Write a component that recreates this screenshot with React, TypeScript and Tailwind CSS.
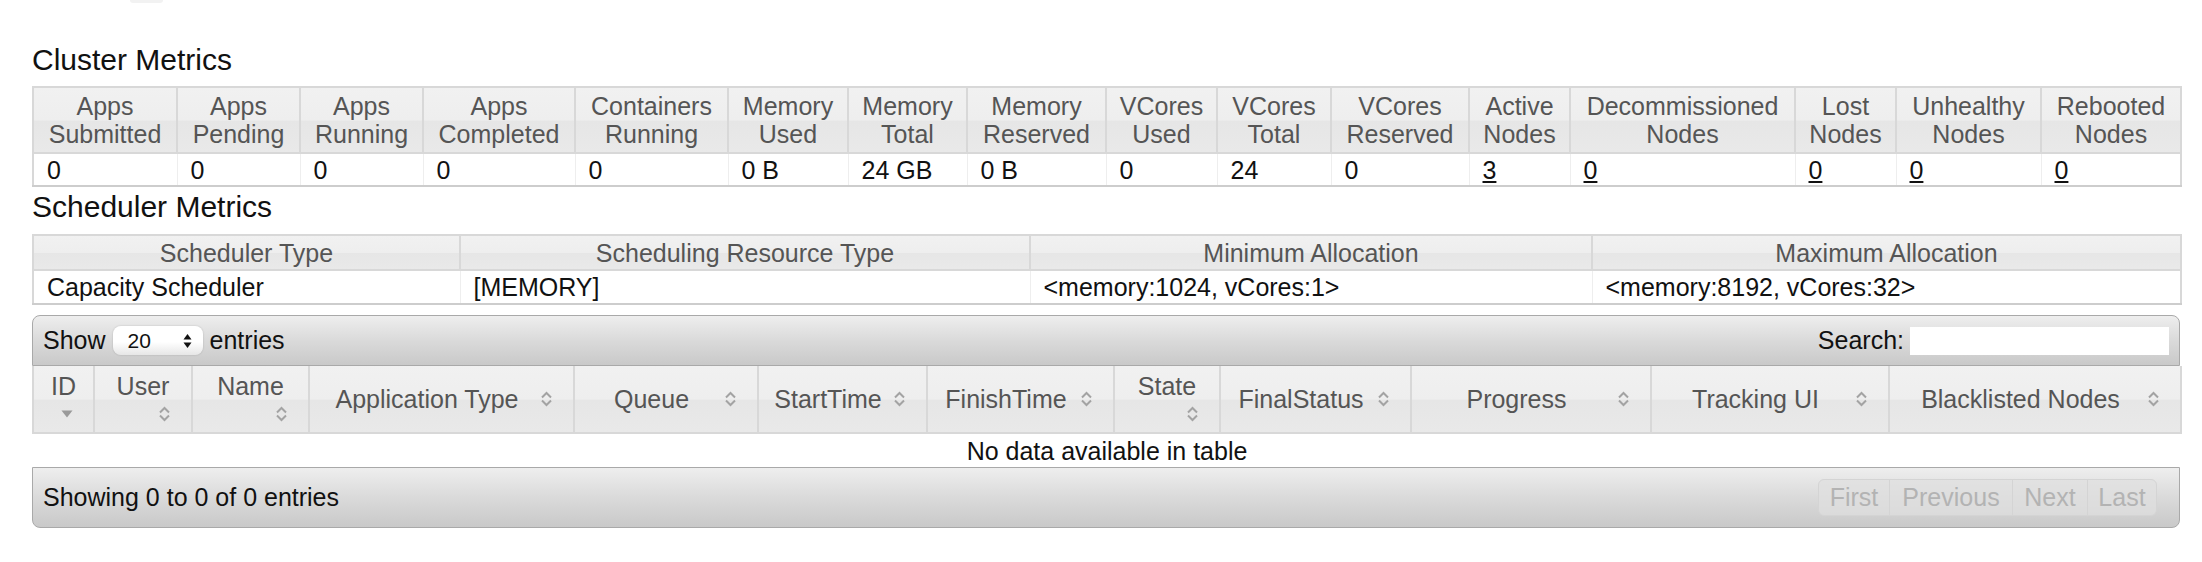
import type { ReactNode } from "react";

const clusterCols = [
  { h: ["Apps", "Submitted"], v: "0", w: "w-[144px]" },
  { h: ["Apps", "Pending"], v: "0", w: "w-[123px]" },
  { h: ["Apps", "Running"], v: "0", w: "w-[123px]" },
  { h: ["Apps", "Completed"], v: "0", w: "w-[152px]" },
  { h: ["Containers", "Running"], v: "0", w: "w-[153px]" },
  { h: ["Memory", "Used"], v: "0 B", w: "w-[120px]" },
  { h: ["Memory", "Total"], v: "24 GB", w: "w-[119px]" },
  { h: ["Memory", "Reserved"], v: "0 B", w: "w-[139px]" },
  { h: ["VCores", "Used"], v: "0", w: "w-[111px]" },
  { h: ["VCores", "Total"], v: "24", w: "w-[114px]" },
  { h: ["VCores", "Reserved"], v: "0", w: "w-[138px]" },
  { h: ["Active", "Nodes"], v: "3", w: "w-[101px]", link: true },
  { h: ["Decommissioned", "Nodes"], v: "0", w: "w-[225px]", link: true },
  { h: ["Lost", "Nodes"], v: "0", w: "w-[101px]", link: true },
  { h: ["Unhealthy", "Nodes"], v: "0", w: "w-[145px]", link: true },
  { h: ["Rebooted", "Nodes"], v: "0", w: "w-[140px]", link: true },
];

const schedCols = [
  { h: "Scheduler Type", v: "Capacity Scheduler", w: "w-[427px]" },
  { h: "Scheduling Resource Type", v: "[MEMORY]", w: "w-[570px]" },
  { h: "Minimum Allocation", v: "<memory:1024, vCores:1>", w: "w-[562px]" },
  { h: "Maximum Allocation", v: "<memory:8192, vCores:32>", w: "w-[589px]" },
];

// wrap: text on first line, sort icon on the line below
const appCols = [
  { h: "ID", w: "w-[61px]", wrap: true, sorted: true },
  { h: "User", w: "w-[98px]", wrap: true },
  { h: "Name", w: "w-[117px]", wrap: true },
  { h: "Application Type", w: "w-[265px]" },
  { h: "Queue", w: "w-[184px]" },
  { h: "StartTime", w: "w-[169px]" },
  { h: "FinishTime", w: "w-[187px]" },
  { h: "State", w: "w-[106px]", wrap: true },
  { h: "FinalStatus", w: "w-[191px]" },
  { h: "Progress", w: "w-[240px]" },
  { h: "Tracking UI", w: "w-[238px]" },
  { h: "Blacklisted Nodes", w: "w-[292px]" },
];

const headerBg =
  "bg-[linear-gradient(to_bottom,#f1f1f1_0%,#eeeeee_50%,#e6e6e6_52%,#e9e9e9_100%)]";
const barBg = "bg-[linear-gradient(to_bottom,#eeeeee_0%,#dadada_50%,#c9c9c9_100%)]";

function SortIcon() {
  return (
    <svg width="13" height="18" viewBox="0 0 13 18" className="shrink-0">
      <path d="M2 7.5 L6.5 3 L11 7.5" fill="none" stroke="#a3a3a3" strokeWidth="2" />
      <path d="M2 10.5 L6.5 15 L11 10.5" fill="none" stroke="#a3a3a3" strokeWidth="2" />
    </svg>
  );
}

function SortedDown() {
  return (
    <svg width="12" height="8" viewBox="0 0 12 8" className="shrink-0">
      <path d="M0.5 0.5 L11.5 0.5 L6 7.5 Z" fill="#9a9a9a" />
    </svg>
  );
}

function Title({ children }: { children: ReactNode }) {
  return <h3 className="text-[30px] leading-[36px] text-[#111]">{children}</h3>;
}

export default function App() {
  return (
    <div className="min-h-[562px] bg-white pl-[32px] font-['Liberation_Sans',Arial,Helvetica,sans-serif] text-[25px] text-[#111]">
      <div className="ml-[98px] h-[3px] w-[33px] rounded-b-[3px] bg-[#f2f2f2]" />

      <div className="mt-[39px]">
        <Title>Cluster Metrics</Title>
      </div>
      <table className="mt-[8px] w-[2148px] table-fixed border-collapse">
        <colgroup>
          {clusterCols.map((c) => (
            <col key={c.h.join(" ")} className={c.w} />
          ))}
        </colgroup>
        <thead>
          <tr>
            {clusterCols.map((c) => (
              <th
                key={c.h.join(" ")}
                className={`${headerBg} h-[66px] border-2 border-[#d8d8d8] px-[4px] pt-[4px] pb-0 text-center align-top font-normal leading-[28px] text-[#555]`}
              >
                <div>{c.h[0]}</div>
                <div>{c.h[1]}</div>
              </th>
            ))}
          </tr>
        </thead>
        <tbody>
          <tr>
            {clusterCols.map((c) => (
              <td
                key={c.h.join(" ")}
                className="h-[33px] border-x border-b-2 border-x-[#eeeeee] border-b-[#cdcdcd] pl-[13px] align-middle leading-[28px] first:border-l-2 first:border-l-[#d8d8d8] last:border-r-2 last:border-r-[#d8d8d8]"
              >
                {c.link ? <a className="underline">{c.v}</a> : c.v}
              </td>
            ))}
          </tr>
        </tbody>
      </table>

      <div className="mt-[2px]">
        <Title>Scheduler Metrics</Title>
      </div>
      <table className="mt-[9px] w-[2148px] table-fixed border-collapse">
        <colgroup>
          {schedCols.map((c) => (
            <col key={c.h} className={c.w} />
          ))}
        </colgroup>
        <thead>
          <tr>
            {schedCols.map((c) => (
              <th
                key={c.h}
                className={`${headerBg} h-[35px] border-2 border-[#d8d8d8] text-center align-middle font-normal leading-[28px] text-[#555]`}
              >
                {c.h}
              </th>
            ))}
          </tr>
        </thead>
        <tbody>
          <tr>
            {schedCols.map((c) => (
              <td
                key={c.h}
                className="h-[34px] border-x border-b-2 border-x-[#eeeeee] border-b-[#cdcdcd] pl-[13px] align-middle leading-[28px] first:border-l-2 first:border-l-[#d8d8d8] last:border-r-2 last:border-r-[#d8d8d8]"
              >
                {c.v}
              </td>
            ))}
          </tr>
        </tbody>
      </table>

      <div className="mt-[10px] w-[2148px]">
        <div
          className={`${barBg} flex h-[51px] items-center justify-between rounded-t-[8px] border border-[#a9a9a9] pl-[10px] pr-[10px]`}
        >
          <div className="flex items-center gap-[7px]">
            <span>Show</span>
            <div className="flex h-[29px] w-[90px] items-center justify-between rounded-[8px] bg-[linear-gradient(to_bottom,#ffffff_0%,#ffffff_55%,#e6e6e6_100%)] pl-[15px] pr-[11px] text-[21px] shadow-[0_0_2px_rgba(0,0,0,0.2)]">
              <span>20</span>
              <svg width="9" height="16" viewBox="0 0 9 16">
                <path d="M4.5 1 L8.5 6.5 L0.5 6.5 Z" fill="#111" />
                <path d="M4.5 15 L8.5 9.5 L0.5 9.5 Z" fill="#111" />
              </svg>
            </div>
            <span>entries</span>
          </div>
          <div className="flex items-center gap-[6px]">
            <span>Search:</span>
            <div className="h-[28px] w-[259px] bg-white" />
          </div>
        </div>

        <table className="w-[2148px] table-fixed border-collapse">
          <colgroup>
            {appCols.map((c) => (
              <col key={c.h} className={c.w} />
            ))}
          </colgroup>
          <thead>
            <tr>
              {appCols.map((c) => (
                <th
                  key={c.h}
                  className={`${headerBg} h-[67px] border-2 border-t-0 border-[#d8d8d8] p-0 font-normal leading-[28px] text-[#555] ${
                    c.wrap ? "align-top" : "align-middle"
                  }`}
                >
                  {c.wrap ? (
                    <div className="flex flex-col pt-[6px]">
                      <span className="text-center">{c.h}</span>
                      <div className="flex h-[28px] items-center justify-end pr-[20px]">
                        {c.sorted ? <SortedDown /> : <SortIcon />}
                      </div>
                    </div>
                  ) : (
                    <div className="flex items-center pl-[10px] pr-[20px]">
                      <span className="flex-1 pr-[6px] text-center">{c.h}</span>
                      <SortIcon />
                    </div>
                  )}
                </th>
              ))}
            </tr>
          </thead>
          <tbody>
            <tr>
              <td colSpan={12} className="h-[34px] text-center align-middle leading-[28px]">
                No data available in table
              </td>
            </tr>
          </tbody>
        </table>

        <div
          className={`${barBg} flex h-[61px] items-center justify-between rounded-b-[8px] border border-[#a9a9a9] pl-[10px] pr-[22px]`}
        >
          <span>Showing 0 to 0 of 0 entries</span>
          <div className="flex h-[37px] items-stretch overflow-hidden rounded-[6px] border border-[#d4d4d4] bg-[#e0e0e0]/70 text-[#b3b3b3]">
            <span className="flex w-[71px] items-center justify-center border-r border-[#d4d4d4]">First</span>
            <span className="flex w-[123px] items-center justify-center border-r border-[#d4d4d4]">Previous</span>
            <span className="flex w-[75px] items-center justify-center border-r border-[#d4d4d4]">Next</span>
            <span className="flex w-[68px] items-center justify-center">Last</span>
          </div>
        </div>
      </div>
    </div>
  );
}
